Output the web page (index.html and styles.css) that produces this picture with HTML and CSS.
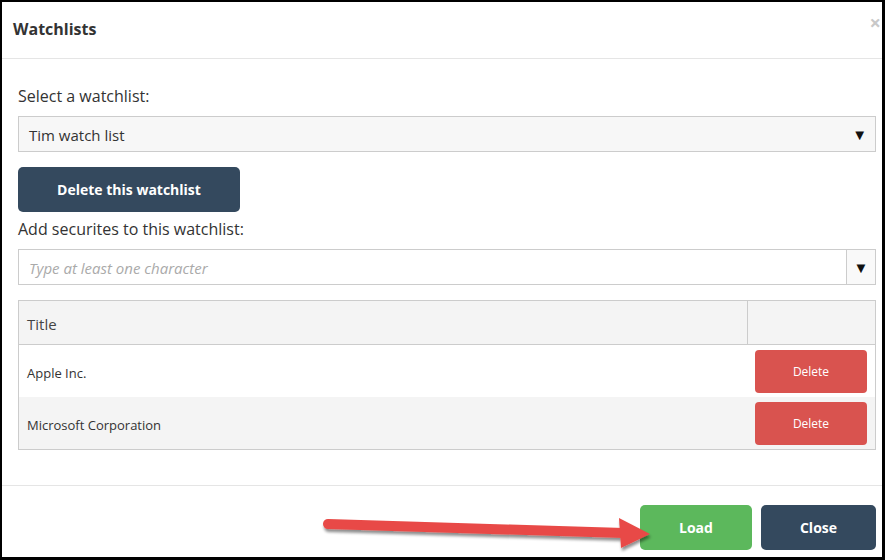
FILE: index.html
```html
<!DOCTYPE html>
<html>
<head>
<meta charset="utf-8">
<link rel="stylesheet" href="styles.css">
</head>
<body>
<div class="dialog">
  <div class="header">
    <h1 class="title">Watchlists</h1>
    <span class="close-x">×</span>
  </div>
  <div class="content">
    <div class="label first">Select a watchlist:</div>
    <div class="select">
      <span>Tim watch list</span>
      <span class="caret">▼</span>
    </div>
    <button class="btn btn-dark btn-delete-list">Delete this watchlist</button>
    <div class="label second">Add securites to this watchlist:</div>
    <div class="combo">
      <span class="placeholder">Type at least one character</span>
      <span class="combo-btn"><span class="caret">▼</span></span>
    </div>
    <div class="table">
      <div class="row head">
        <div class="cell title-cell">Title</div>
        <div class="cell action-cell"></div>
      </div>
      <div class="row r1">
        <div class="cell title-cell">Apple Inc.</div>
        <div class="cell action-cell"><button class="btn btn-red">Delete</button></div>
      </div>
      <div class="row alt">
        <div class="cell title-cell">Microsoft Corporation</div>
        <div class="cell action-cell"><button class="btn btn-red">Delete</button></div>
      </div>
    </div>
  </div>
  <div class="footer">
    <button class="btn btn-green btn-foot">Load</button>
    <button class="btn btn-dark btn-foot close-btn">Close</button>
  </div>
  <svg class="arrow" width="885" height="560" viewBox="0 0 885 560">
    <defs>
      <filter id="sh" x="-10%" y="-50%" width="120%" height="200%">
        <feGaussianBlur in="SourceAlpha" stdDeviation="1.5"/>
        <feOffset dx="1" dy="3" result="b"/>
        <feComponentTransfer><feFuncA type="linear" slope="0.45"/></feComponentTransfer>
        <feMerge><feMergeNode/><feMergeNode in="SourceGraphic"/></feMerge>
      </filter>
    </defs>
    <g filter="url(#sh)">
      <line x1="328" y1="524" x2="624" y2="533" stroke="#e84a46" stroke-width="10" stroke-linecap="round"/>
      <polygon points="619,518 650,534 621,548" fill="#e84a46"/>
    </g>
  </svg>
</div>
</body>
</html>
```
FILE: styles.css
```css
html, body {
  margin: 0;
  padding: 0;
  background: #000;
}
body {
  width: 885px;
  height: 560px;
  overflow: hidden;
  font-family: "Open Sans", "Liberation Sans", sans-serif;
  color: #333;
}
.dialog {
  position: relative;
  margin: 2px 0 0 2px;
  width: 880px;
  height: 555px;
  background: #fff;
  display: flex;
  flex-direction: column;
}
.header {
  height: 56px;
  flex: none;
  border-bottom: 1px solid #e5e5e5;
  display: flex;
  align-items: center;
  justify-content: space-between;
  padding: 0 1px 0 11px;
}
.title {
  margin: 0;
  font-size: 16px;
  font-weight: 700;
  color: #333;
  position: relative;
  top: -1px;
}
.close-x {
  font-size: 20px;
  color: #c8c8c8;
  font-weight: 700;
  position: relative;
  top: -7px;
  line-height: 1;
}
.content {
  padding: 0 6px 0 16px;
  flex: 1;
  border-bottom: 1px solid #e5e5e5;
}
.label {
  font-size: 16px;
  line-height: 22px;
  color: #333;
}
.label.first {
  margin-top: 26px;
  margin-bottom: 9px;
}
.label.second {
  margin-top: 6px;
  margin-bottom: 9px;
}
.select {
  height: 34px;
  border: 1px solid #ccc;
  background: #f7f7f7;
  display: flex;
  align-items: center;
  justify-content: space-between;
  padding: 0 8px 0 10px;
  font-size: 15px;
  color: #333;
}
.select span:first-child {
  position: relative;
  top: 1px;
}
.caret {
  font-size: 15px;
  color: #111;
}
.btn {
  border: none;
  color: #fff;
  font-family: "Open Sans", "Liberation Sans", sans-serif;
  cursor: pointer;
  padding: 0;
}
.btn-dark {
  background: #34495e;
}
.btn-delete-list {
  margin-top: 15px;
  width: 222px;
  height: 45px;
  border-radius: 5px;
  font-size: 14px;
  font-weight: 700;
  display: block;
}
.combo {
  height: 34px;
  border: 1px solid #ccc;
  display: flex;
  align-items: center;
  justify-content: space-between;
  padding-left: 10px;
}
.placeholder {
  font-style: italic;
  color: #aaa;
  font-size: 15px;
  position: relative;
  top: 1px;
}
.combo-btn {
  width: 28px;
  height: 34px;
  border-left: 1px solid #ccc;
  background: #f9f9f9;
  display: flex;
  align-items: center;
  justify-content: center;
}
.table {
  margin-top: 15px;
  border: 1px solid #ccc;
}
.row {
  display: flex;
  height: 52px;
  align-items: center;
  background: #fff;
}
.row.head {
  height: 43px;
  background: #f4f4f4;
  border-bottom: 1px solid #ccc;
}
.row.alt {
  background: #f4f4f4;
}
.cell {
  height: 100%;
  display: flex;
  align-items: center;
  box-sizing: border-box;
}
.title-cell {
  flex: 1;
  padding-left: 8px;
  font-size: 13px;
  color: #333;
  padding-top: 3px;
}
.head .title-cell {
  font-size: 15px;
  color: #444;
  padding-top: 2px;
}
.action-cell {
  width: 128px;
  padding-left: 8px;
  padding-top: 0;
}
.head .action-cell {
  border-left: 1px solid #ccc;
}
.btn-red {
  background: #d9534f;
  width: 112px;
  height: 43px;
  border-radius: 4px;
  font-size: 12px;
}
.footer {
  box-sizing: border-box;
  height: 71px;
  flex: none;
  display: flex;
  justify-content: flex-end;
  align-items: flex-start;
  padding: 19px 6px 0 0;
  gap: 9px;
}
.btn-foot {
  height: 45px;
  border-radius: 5px;
  font-size: 14px;
  font-weight: 700;
}
.btn-green {
  background: #5cb85c;
  width: 112px;
}
.close-btn {
  width: 115px;
}
.arrow {
  position: absolute;
  left: -2px;
  top: -2px;
  pointer-events: none;
}
```
